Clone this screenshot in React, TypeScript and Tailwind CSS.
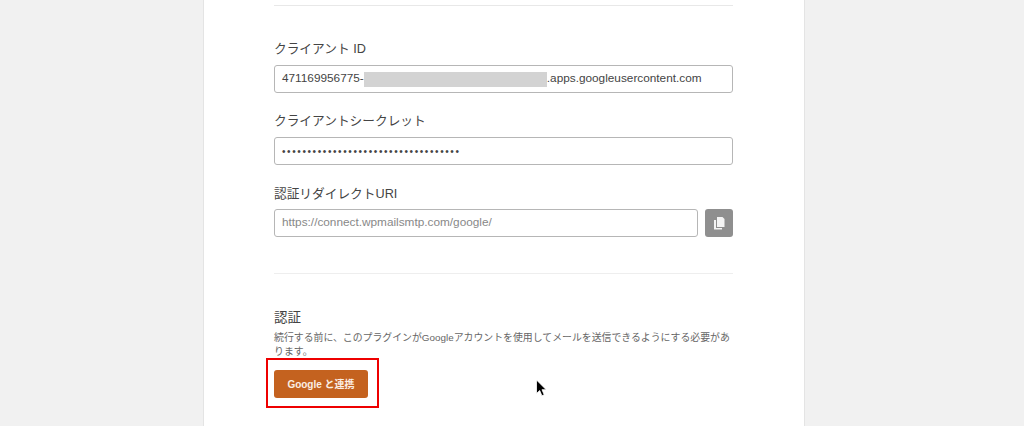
function Label({ children, className = "" }: { children: React.ReactNode; className?: string }) {
  return <div className={`text-[12.7px] leading-[18px] text-[#444] ${className}`}>{children}</div>;
}

function Field({ children }: { children: React.ReactNode }) {
  return (
    <div className="flex h-[28px] flex-1 items-center rounded-[3px] border border-[#b6b6b6] bg-white px-[7px] text-[11.8px] text-[#444]">
      {children}
    </div>
  );
}

function CopyIcon() {
  return (
    <svg width="14" height="15" viewBox="0 0 14 15" fill="#f4f4f4">
      <path d="M5 1h5.5L12.5 3v8H5z" />
      <path d="M2 4h2v8h6v1.5H2z" />
    </svg>
  );
}

export default function App() {
  return (
    <div className="relative h-[426px] w-[1024px] overflow-hidden bg-[#f1f1f1] font-['Liberation_Sans','Noto_Sans_CJK_JP',sans-serif]">
      <div className="ml-[203px] h-[426px] w-[602px] border-x border-[#e4e4e4] bg-white pl-[70px] pr-[71px] pt-[5px]">
        <div className="h-px bg-[#e8e8e8]" />

        <Label className="mt-[34px]">クライアント ID</Label>
        <div className="mt-[7px] flex">
          <Field>
            471169956775-
            <span className="h-[15px] w-[183px] bg-[#d3d3d3]" />
            .apps.googleusercontent.com
          </Field>
        </div>

        <Label className="mt-[19px]">クライアントシークレット</Label>
        <div className="mt-[7px] flex">
          <Field>
            <span className="text-[10px] tracking-[1.6px] text-[#444]">
              •••••••••••••••••••••••••••••••••••
            </span>
          </Field>
        </div>

        <Label className="mt-[20px]">認証リダイレクトURI</Label>
        <div className="mt-[6px] flex gap-[7px]">
          <Field>
            <span className="text-[#888]">https://connect.wpmailsmtp.com/google/</span>
          </Field>
          <button className="flex h-[28px] w-[28px] items-center justify-center rounded-[3px] bg-[#8f8f8f]">
            <CopyIcon />
          </button>
        </div>

        <div className="mt-[36px] h-px bg-[#eeeeee]" />

        <div className="mt-[35px] text-[13.5px] leading-[18px] text-[#444]">認証</div>
        <p className="mt-[4px] text-[9.9px] leading-[14px] text-[#666]">
          続行する前に、このプラグインがGoogleアカウントを使用してメールを送信できるようにする必要があります。
        </p>
        <div className="relative mt-[11px] w-[94px]">
          <button className="h-[28px] w-[94px] rounded-[3px] bg-[#c4621f] text-[10px] font-bold text-[#fbeee4]">
            Google と連携
          </button>
          <div className="absolute -bottom-[10px] -left-[8px] -right-[11px] -top-[12px] border-2 border-[#ee0000]" />
        </div>
      </div>

      <svg className="absolute left-[535px] top-[379px]" width="13" height="19" viewBox="0 0 13 19">
        <path d="M1.5 1v13.5l3.2-3 2.2 5.2 2.3-1-2.2-5h4.2z" fill="#000" stroke="#fff" strokeWidth="0.8" />
      </svg>
    </div>
  );
}
